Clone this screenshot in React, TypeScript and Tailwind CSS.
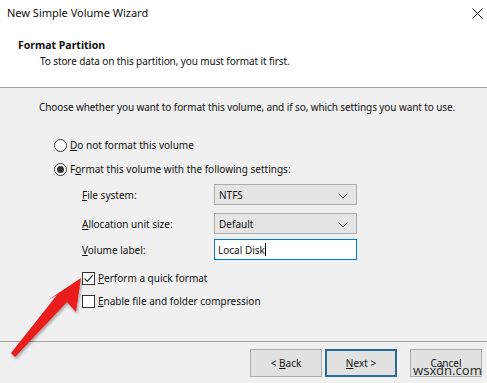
const font = { fontFamily: '"Noto Sans", "Open Sans", sans-serif' }

const Radio = ({ checked }: { checked?: boolean }) => (
  <span className="w-[13px] h-[13px] rounded-full border border-[#333] bg-white flex items-center justify-center shrink-0">
    {checked && <span className="w-[7px] h-[7px] rounded-full bg-[#333]" />}
  </span>
)

const Check = ({ checked }: { checked?: boolean }) => (
  <span className="w-[13px] h-[13px] border border-[#333] bg-white flex items-center justify-center shrink-0">
    {checked && (
      <svg width="11" height="11" viewBox="0 0 11 11">
        <path d="M1.5 5.5 L4.3 8.3 L9.8 2" fill="none" stroke="#333" strokeWidth="1.2" />
      </svg>
    )}
  </span>
)

const Chevron = () => (
  <svg width="10" height="6" viewBox="0 0 10 6" className="absolute right-[8px] top-[8px]">
    <path d="M0.5 0.5 L5 5 L9.5 0.5" fill="none" stroke="#555" strokeWidth="1" />
  </svg>
)

const Select = ({ value }: { value: string }) => (
  <div className="relative w-[143px] h-[21px] bg-[#e5e5e5] border border-[#acacac] pl-[4px] flex items-center">
    {value}
    <Chevron />
  </div>
)

const Btn = ({ children, focus }: { children: React.ReactNode; focus?: boolean }) => (
  <div
    className={
      "h-[28px] w-[72px] flex items-center justify-center bg-[#e1e1e1] whitespace-pre " +
      (focus ? "border-2 border-[#2b6a94]" : "border border-[#adadad]")
    }
  >
    {children}
  </div>
)

const App = () => {
  return (
    <div className="relative w-[487px] h-[383px] bg-[#f0f0f0] text-[#111] text-[10px] leading-4 overflow-hidden" style={font}>
      <div className="bg-white h-[26px] flex items-center justify-between pl-[7px] pr-[4px] text-[11px]">
        <span>New Simple Volume Wizard</span>
        <svg width="11" height="11" viewBox="0 0 11 11">
          <path d="M0.5 0.5 L10.5 10.5 M10.5 0.5 L0.5 10.5" stroke="#111" strokeWidth="1" />
        </svg>
      </div>

      <div className="bg-white h-[62px] border-b border-[#a0a0a0] pt-[11px]">
        <div className="pl-[18px] font-bold text-[10.5px]">Format Partition</div>
        <div className="pl-[40px] tracking-[-0.1px]">To store data on this partition, you must format it first.</div>
      </div>

      <div className="h-[253px] pt-[11px]">
        <p className="pl-[39px] h-4 whitespace-nowrap tracking-[-0.1px]">Choose whether you want to format this volume, and if so, which settings you want to use.</p>

        <div className="mt-[18px] h-[24px] pl-[54px] flex items-center gap-[3px]">
          <Radio />
          <span><u>D</u>o not format this volume</span>
        </div>
        <div className="h-[24px] pl-[54px] flex items-center gap-[3px]">
          <Radio checked />
          <span>F<u>o</u>rmat this volume with the following settings:</span>
        </div>

        <div className="pl-[82px]">
          <div className="mt-[3px] h-[21px] flex items-center">
            <span className="w-[132px]"><u>F</u>ile system:</span>
            <Select value="NTFS" />
          </div>
          <div className="mt-[8px] h-[21px] flex items-center">
            <span className="w-[132px]"><u>A</u>llocation unit size:</span>
            <Select value="Default" />
          </div>
          <div className="mt-[5px] h-[21px] flex items-center">
            <span className="w-[132px]"><u>V</u>olume label:</span>
            <div className="w-[143px] h-[21px] bg-white border border-[#0078d7] pl-[3px] flex items-center">
              Local Disk<span className="inline-block w-px h-[13px] bg-black" />
            </div>
          </div>

          <div className="mt-[10px] h-4 flex items-center gap-[3px]">
            <Check checked />
            <span><u>P</u>erform a quick format</span>
          </div>
          <div className="mt-[7px] h-4 flex items-center gap-[3px]">
            <Check />
            <span><u>E</u>nable file and folder compression</span>
          </div>
        </div>
      </div>

      <div className="border-t border-[#a0a0a0] pt-[7px] pr-[5px] flex justify-end">
        <div className="flex gap-[3px]">
          <Btn>{"< "}<u>B</u>ack</Btn>
          <Btn focus><u>N</u>ext{" >"}</Btn>
        </div>
        <div className="ml-[13px]">
          <Btn>Cancel</Btn>
        </div>
      </div>

      <span className="absolute left-[413px] top-[364px] text-[13px] leading-none text-[#333]">wsxdn.com</span>

      <svg width="487" height="383" className="absolute left-0 top-0 pointer-events-none">
        <defs>
          <filter id="sh" x="-20%" y="-20%" width="140%" height="140%">
            <feDropShadow dx="1" dy="2" stdDeviation="1.5" floodColor="#000" floodOpacity="0.35" />
          </filter>
        </defs>
        <polygon
          points="81,278 76,312 67,302 15,357 11,353 57,295 48,300"
          fill="#ea1c1c"
          filter="url(#sh)"
        />
      </svg>
    </div>
  )
}

export default App
